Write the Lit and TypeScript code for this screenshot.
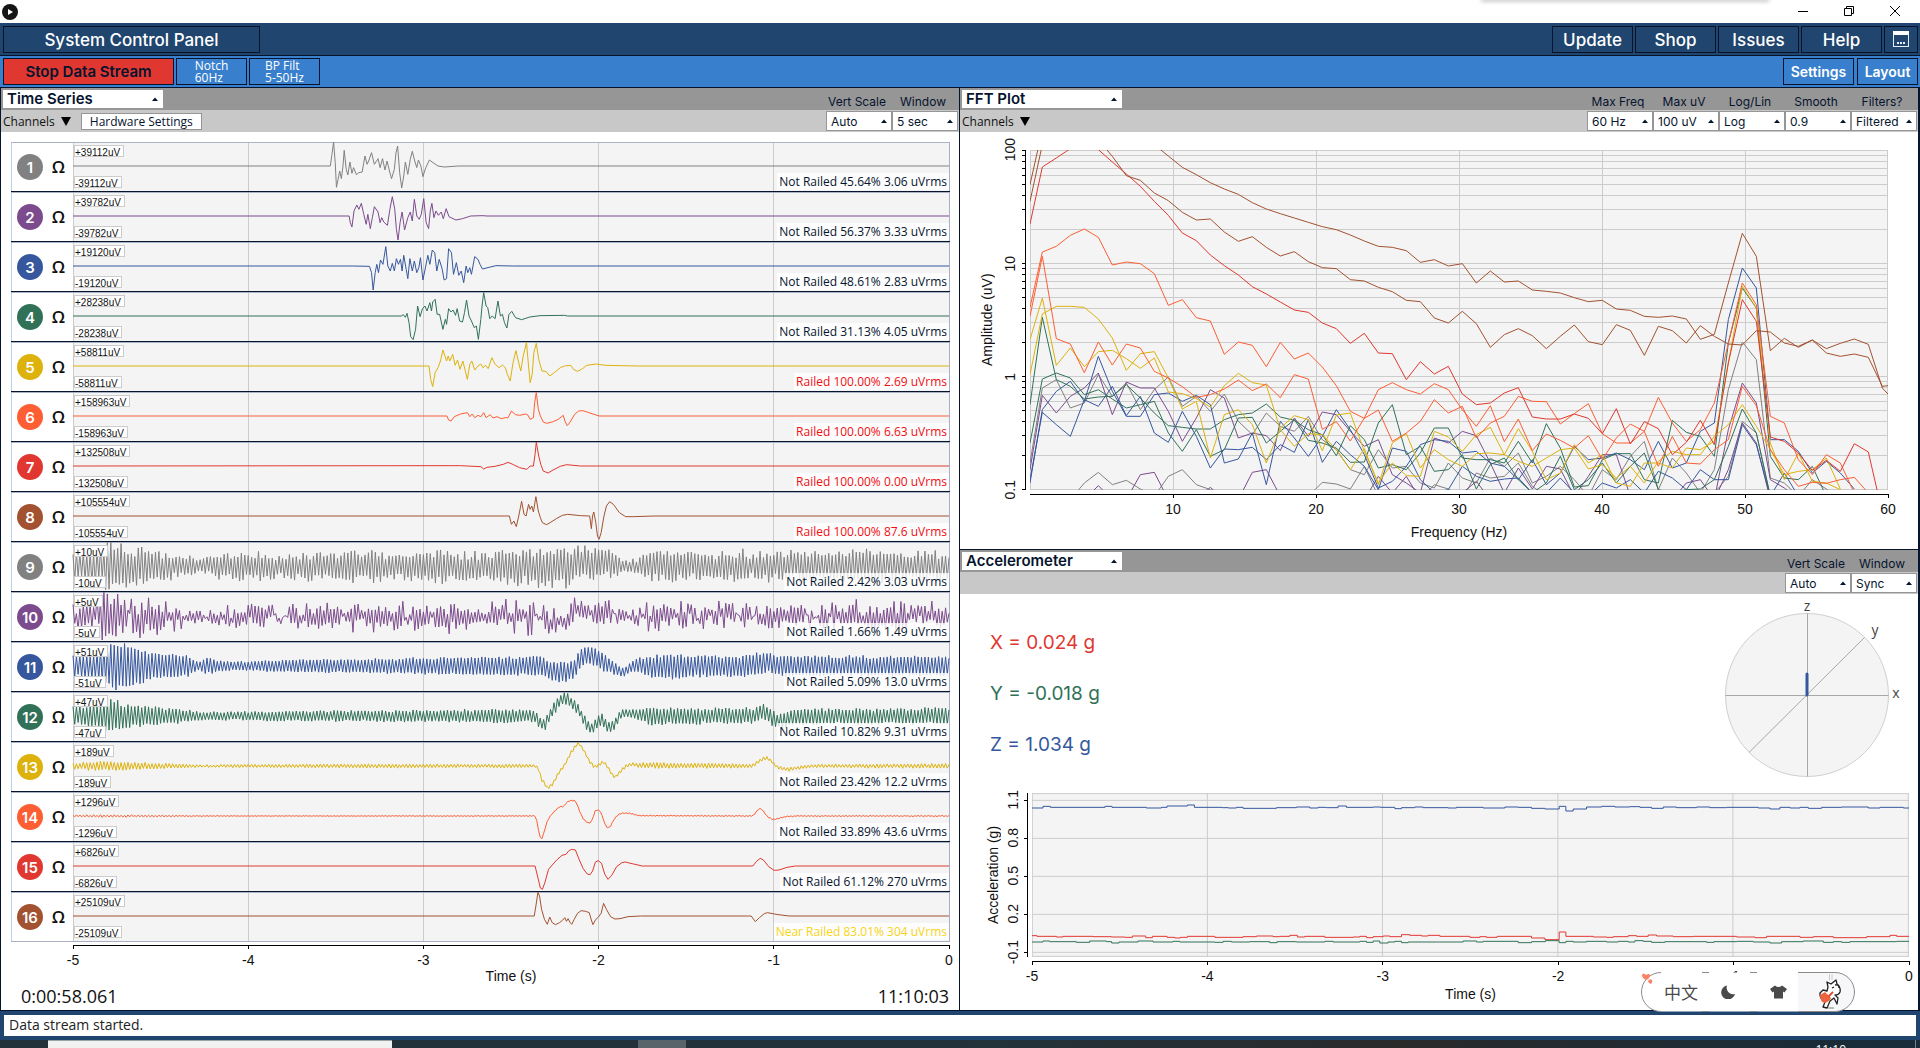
import { LitElement, html, svg, css } from "lit";
import { customElement, property } from "lit/decorators.js";

type Pt = [number, number];

const GRAY = "#818181", PURPLE = "#7c4b8d", BLUE = "#36579e", GREEN = "#317158";
const YELLOW = "#ddb20d", ORANGE = "#fd5e34", RED = "#e03830", BROWN = "#a25230";
const PALETTE = [GRAY, PURPLE, BLUE, GREEN, YELLOW, ORANGE, RED, BROWN];

/* Traces share a horizontal scale of 2148 units for the 5 s window and 150 units per row. */
const SPAN = 2148;
const ROW = 150;

const toPts = (s: string): Pt[] => s.trim().split(/\s+/).map((p) => p.split(",").map(Number) as Pt);
const path = (pts: Pt[]) => "M" + pts.map(([x, y]) => `${x.toFixed(1)} ${y.toFixed(1)}`).join("L");
const shift = (pts: Pt[], dx: number): Pt[] => pts.map(([x, y]) => [x + dx, y]);

function lerp(pts: Pt[], x: number): number {
  if (x <= pts[0][0]) return pts[0][1];
  for (let i = 1; i < pts.length; i++) {
    if (x <= pts[i][0]) {
      const [x0, y0] = pts[i - 1], [x1, y1] = pts[i];
      return y0 + ((y1 - y0) * (x - x0)) / (x1 - x0);
    }
  }
  return pts[pts.length - 1][1];
}

function rng(seed: number) {
  let s = seed;
  return () => ((s = (s * 1664525 + 1013904223) >>> 0) / 4294967296);
}

/* Events of the first eight channels: offsets from the row's centre line. */
const burst = (s: string) => path([[0, 0], ...shift(toPts(s), 605), [SPAN, 0]]);

/* Mains hum over a slow base curve: 255 cycles in the window, one low and one high turn per cycle. */
function hum(seed: number, env: string, base: string, noise: number) {
  const e = toPts(env), b = toPts(base), r = rng(seed), out: Pt[] = [];
  const turns = 510;
  for (let i = 0; i <= turns; i++) {
    const x = 179 + (i * SPAN) / turns;
    const a = lerp(e, x) * (1 - noise * r()) * (i % 2 ? 1 : -1);
    const y = lerp(b, x) + a + lerp(e, x) * noise * (r() - 0.5);
    out.push([x - 179, Math.max(-71, Math.min(72, y))]);
  }
  return path(out);
}
const smooth = (s: string) => path([[0, 0], ...shift(toPts(s), -179), [SPAN, 0]]);

interface Channel { n: number; uv: number; text: string; state: string; d: string }
const CHANNELS: Channel[] = [
  { uv: 39112, text: "Not Railed 45.64% 3.06 uVrms", state: "", d: burst("26,0 30,-35 34,-72 38,-10 41,64 45,40 49,15 53,38 57,0 60,-47 65,10 69,27 74,-12 79,22 83,5 90,26 96,20 104,18 108,-10 111,-30 116,-5 120,-15 127,-40 134,-5 143,-22 148,5 154,-22 160,12 165,-15 171,15 176,38 183,10 187,-40 191,-60 196,20 201,66 206,30 210,-12 216,25 222,-20 227,-44 233,-15 238,5 242,-18 248,0 253,32 260,5 269,-18 278,-10 290,0 305,3 340,0") },
  { uv: 39782, text: "Not Railed 56.37% 3.33 uVrms", state: "", d: burst("72,0 75,20 79,33 84,-15 91,-33 96,-20 102,-38 108,-5 114,25 118,-5 124,38 129,5 134,-28 143,-12 148,20 152,5 157,18 166,28 172,-20 178,-58 184,-20 188,40 192,72 197,20 202,-12 208,42 216,5 222,-12 227,15 232,-50 238,0 244,10 249,-5 255,-52 261,20 267,38 271,-15 275,-38 280,5 285,-15 291,-2 298,-12 303,8 310,-22 317,2 334,12 350,8 370,0 400,-1 410,0") },
  { uv: 19120, text: "Not Railed 48.61% 2.83 uVrms", state: "", d: burst("80,0 122,1 127,20 131,72 136,20 140,-5 144,20 149,-18 155,-5 162,-58 167,0 173,15 178,-8 183,15 188,-22 193,-5 198,-20 202,15 206,-32 212,10 216,38 221,-22 227,15 232,-15 238,20 243,5 247,-25 253,42 260,0 265,-32 270,-5 276,-48 282,-40 287,15 293,-20 300,8 305,42 311,38 316,-52 323,-40 328,25 335,-10 341,28 347,15 353,50 359,0 363,20 368,5 372,25 380,-28 388,-20 393,-5 399,9 415,4 432,-1 475,0") },
  { uv: 28238, text: "Not Railed 31.13% 4.05 uVrms", state: "", d: burst("200,0 205,-4 210,4 214,-8 219,20 223,62 229,71 235,40 240,-30 246,2 252,-22 258,-30 263,-15 270,-40 274,-15 277,-42 283,-50 288,-5 294,-5 302,40 308,10 311,25 316,-22 322,-12 327,-18 333,-2 337,-22 343,15 350,18 355,-10 360,-48 366,0 372,15 379,35 384,30 389,70 395,10 398,-30 402,-70 408,-30 412,-25 417,8 423,0 430,8 437,-45 443,0 448,-5 453,20 459,36 464,-5 471,-14 480,5 495,11 515,3 540,-1 600,-2 608,0") },
  { uv: 58811, text: "Railed 100.00% 2.69 uVrms", state: "railed", d: burst("225,0 268,0 272,40 277,62 283,20 290,5 296,-15 302,-48 307,-30 311,-15 315,-30 319,-15 326,-35 332,-2 338,-18 344,10 351,-15 357,15 362,40 368,-5 373,-15 380,12 388,0 395,-6 400,5 407,-2 413,8 422,-25 430,-5 440,5 448,-3 455,5 460,25 467,45 474,-10 481,-46 487,-15 493,15 499,-30 507,-71 512,0 516,50 521,25 525,-40 531,-68 537,-20 545,15 555,16 564,30 575,20 590,5 600,0 616,-2 622,10 632,16 642,10 655,-2 678,-6 700,-2 780,0") },
  { uv: 158963, text: "Railed 100.00% 6.63 uVrms", state: "railed", d: burst("312,0 316,12 322,15 330,2 345,-6 362,-10 368,2 374,-6 380,5 388,-2 395,2 402,-10 408,5 418,-4 425,6 435,2 445,8 455,5 462,5 470,-15 480,-4 490,-2 505,-6 511,-2 516,10 524,5 527,-40 531,-71 536,-20 541,0 548,18 556,22 570,18 585,10 597,-2 602,18 607,29 614,18 625,-5 635,-15 645,-16 660,-10 685,0") },
  { uv: 132508, text: "Railed 100.00% 0.00 uVrms", state: "railed", d: burst("320,-1 345,-1 395,2 402,9 410,4 430,1 450,-5 462,-11 475,-4 490,5 508,10 516,0 524,0 528,-35 531,-72 537,-30 542,-5 548,15 560,21 572,12 590,1 605,-4 640,0") },
  { uv: 105554, text: "Railed 100.00% 87.6 uVrms", state: "railed", d: burst("465,0 470,25 476,15 482,32 488,0 495,-44 501,-5 506,0 512,-35 516,-20 520,-30 524,-12 530,-58 536,-15 541,5 546,20 556,26 565,20 580,8 595,-2 608,-5 640,-1 662,0 666,38 669,0 672,-12 677,20 681,60 685,70 690,50 697,0 703,-30 711,-43 720,-35 735,-10 750,2 770,2 820,0") },
  { uv: 10, text: "Not Railed 2.42% 3.03 uVrms", state: "", d: hum(7, "179,46 240,50 262,80 300,70 340,54 400,42 450,34 485,18 520,34 600,40 700,38 800,42 900,46 1000,42 1200,50 1330,56 1400,56 1450,48 1490,52 1530,18 1560,20 1592,44 1625,52 1700,40 1900,46 2326,42", "179,0 1390,4 1420,-12 1500,-5 1530,0 2326,0", 0.4) },
  { uv: 5, text: "Not Railed 1.66% 1.49 uVrms", state: "", d: hum(23, "179,38 240,56 262,74 300,62 340,50 400,42 490,20 560,28 700,32 850,34 950,38 1100,38 1300,44 1400,40 1490,36 1540,18 1600,42 1750,38 1850,32 2000,38 2326,36", "179,0 1330,5 1380,25 1410,-20 1500,-8 1530,0 2326,0", 0.8) },
  { uv: 51, text: "Not Railed 5.09% 13.0 uVrms", state: "", d: hum(31, "179,30 240,42 265,72 320,64 370,42 460,30 486,12 505,24 560,14 620,15 750,20 950,22 1150,27 1300,29 1400,29 1480,26 1530,12 1560,20 1600,34 1650,38 1700,32 2326,29", "179,0 1330,0 1345,15 1390,20 1405,10 1420,-15 1435,-35 1450,-30 1480,-12 1510,10 1530,20 1545,5 1560,-2 1600,2 1830,0 1870,-10 1890,-8 1910,0 2326,0", 0.2) },
  { uv: 47, text: "Not Railed 10.82% 9.31 uVrms", state: "", d: hum(43, "179,28 240,34 262,48 320,38 400,25 480,16 500,12 600,14 900,17 1200,20 1480,17 1545,12 1600,26 1700,24 2326,24", "179,0 1312,0 1322,20 1335,28 1345,5 1360,-25 1372,-45 1385,-58 1400,-40 1420,-15 1435,20 1450,40 1462,25 1475,8 1490,35 1505,28 1520,0 1530,-10 1545,-6 1600,0 1846,0 1870,-12 1903,12 1915,18 1944,3 2326,0", 0.25) },
  { uv: 189, text: "Not Railed 23.42% 12.2 uVrms", state: "", d: hum(59, "179,9 220,12 260,15 350,10 450,6 490,4 600,5 900,6 1540,5 1600,9 1700,8 1900,5 2326,7", "179,0 1312,0 1320,8 1328,40 1342,66 1355,55 1368,25 1385,-5 1400,-40 1418,-72 1430,-50 1445,-15 1458,3 1470,-5 1480,-12 1490,2 1500,25 1508,34 1520,18 1535,0 1550,-5 1568,-2 1846,0 1858,-12 1878,-25 1891,-15 1907,5 1935,10 1960,5 1993,0 2326,0", 0.3) },
  { uv: 1296, text: "Not Railed 33.89% 43.6 uVrms", state: "", d: hum(61, "179,3 260,4 450,2 600,1 2326,2", "179,0 1312,0 1318,20 1322,55 1327,72 1331,62 1336,40 1343,12 1350,-1 1360,-14 1372,-28 1382,-28 1390,-42 1398,-46 1408,-47 1414,-38 1422,-12 1430,8 1440,20 1449,20 1454,4 1459,-14 1465,-19 1472,-14 1478,5 1484,26 1491,38 1497,30 1508,5 1520,-7 1530,-9 1545,-8 1568,-1 1846,0 1854,-12 1862,-23 1870,-18 1882,2 1895,11 1907,8 1927,2 1952,0 2326,0", 0.5) },
  { uv: 6826, text: "Not Railed 61.12% 270 uVrms", state: "", d: smooth("1312,0 1318,30 1325,66 1330,70 1336,50 1345,10 1352,0 1365,-18 1378,-32 1388,-35 1395,-46 1402,-50 1411,-48 1420,-20 1430,8 1440,24 1447,26 1453,15 1460,-12 1467,-16 1475,-8 1483,25 1491,40 1500,28 1512,2 1525,-10 1533,-12 1550,-7 1575,0 1846,0 1855,-14 1864,-23 1872,-18 1885,2 1898,13 1910,12 1930,4 1950,0") },
  { uv: 25109, text: "Near Railed 83.01% 304 uVrms", state: "near", d: smooth("1310,0 1314,-30 1319,-71 1323,-60 1328,-20 1335,10 1342,25 1348,3 1354,20 1362,26 1372,20 1380,12 1385,5 1389,16 1393,8 1398,20 1402,25 1408,10 1416,-8 1425,-16 1436,-14 1445,-10 1450,12 1454,26 1460,12 1468,2 1474,-8 1480,-38 1487,-20 1497,2 1508,9 1520,8 1540,2 1570,0 1842,0 1852,17 1862,5 1874,-7 1882,-10 1903,-5 1935,0") },
].map((c, i) => ({ ...c, n: i + 1 }));

/* Spectra: the first value is at 0 Hz, the others one bin (42 units) apart. Vertical axis: 339 units per decade. */
const bins = (s: string) =>
  path(s.trim().split(/\s+/).map((v, i) => [i === 0 ? 0 : 37 + 42 * (i - 1), Number(v) - 61] as Pt));
const SPECTRA: [string, string][] = [
  [GRAY, bins("1110 1110 1110 1110 1060 1028 1065 1052 1078 1100 1040 1020 1065 1080 1100 1110 1110 1110 1110 1110 1100 1058 1063 1078 1010 1100 1110 1110 1110 1065 1078 1110 1030 1045 1040 1000 1070 1100 1100 1110 1110 1110 1110 1110 1110 1110 1110 1110 1110 1090 1040 875 910 1100 1110 1110 1110")],
  [GRAY, bins("1000 775 750 835 820 735 800 760 840 780 742 830 800 845 793 875 915 850 890 905 860 930 960 1020 1035 960 1015 1010 1060 1075 1000 1045 1060 985 1010 970 1060 1040 1010 1050 1100 1020 1050 980 935 1080 985 1030 1090 1020 780 637 690 1045 1060 1100 1050 1078 1110")],
  [PURPLE, bins("1110 1110 1110 1110 1110 1068 1110 1110 1035 1028 1110 1110 1110 1073 1110 1110 1028 1020 1100 1110 1110 1110 1110 1110 1110 1040 1090 1040 1110 1110 1110 1090 1055 1110 1110 1110 1110 1110 1110 1110 1110 1110 1110 1110 1110 1110 1110 1110 1110 1110 1020 880 940 1110")],
  [PURPLE, bins("1020 797 850 800 775 730 855 757 775 775 845 935 865 780 805 925 910 918 963 865 920 847 855 905 950 930 1035 1060 1090 925 940 905 918 1000 1090 1015 1078 1010 1018 1100 1040 975 975 1100 1110 1110 1110 1060 1050 1110 900 760 820 1050 1075 1110")],
  [BLUE, bins("1060 840 785 755 815 680 785 860 860 795 790 815 797 825 1000 988 910 1065 875 925 980 920 840 900 975 1075 1055 1010 945 930 935 970 965 1000 1010 1050 990 1065 1030 950 990 985 970 990 1020 935 1015 1000 905 880 570 415 475 930 930 965 1030 995 1030 1078")],
  [BLUE, bins("1050 848 885 920 810 830 770 858 800 910 938 845 920 1015 958 960 953 990 945 968 870 998 935 975 1010 1080 955 965 1050 1090 1080 1010 1040 1055 1048 1045 1090 1090 1045 1090 1100 1060 1075 1050 1090 1025 1045 1080 1020 1050 1050 885 945 1100 1030 1100")],
  [GREEN, bins("825 563 750 770 808 802 800 765 805 850 888 893 898 898 870 855 850 823 862 872 900 915 978 888 930 1015 1005 1020 970 895 895 985 990 990 1000 935 1000 882 955 1072 1068 990 972 972 1050 1060 872 908 920 980 640 475 535 980 1045 1050 1010 1100")],
  [GREEN, bins("940 748 730 745 795 780 808 835 825 815 910 965 900 980 960 865 863 940 905 870 932 940 955 998 997 880 825 975 950 1025 1020 975 1078 1005 985 1050 1090 1060 980 1080 1050 1000 1060 1010 970 1080 1090 1080 1078 1050 950 838 910 1100")],
  [YELLOW, bins("735 553 530 530 533 568 625 722 672 666 745 838 815 985 855 840 885 1000 895 858 870 963 856 850 965 1060 1000 1038 1040 905 922 965 915 893 975 897 965 1050 1030 945 1000 975 1060 1070 1000 1000 1015 955 960 935 700 470 535 940 1050 970 1055 1060 1080")],
  [YELLOW, bins("630 505 707 655 711 666 662 687 716 685 787 792 807 832 768 731 759 766 900 950 912 915 960 1020 957 1065 940 912 1015 960 990 1010 972 970 975 995 1010 985 960 955 1018 1005 1045 1010 1060 995 965 975 975 920 885 825 890 960 1035 1025 1020 985 1078")],
  [ORANGE, bins("533 367 350 317 298 323 406 397 402 432 527 510 564 574 674 637 647 711 638 688 670 712 768 845 866 841 935 910 875 810 850 830 925 880 860 800 815 816 883 852 822 912 940 940 905 803 880 935 900 820 640 460 525 860 880 990 1035 975 1000 1090")],
  [ORANGE, bins("560 380 627 643 729 637 706 643 655 725 745 771 803 795 778 751 783 763 804 735 748 899 876 934 865 780 759 780 793 762 780 840 890 828 936 868 963 913 932 955 918 990 925 883 905 1010 920 1000 1003 960 930 770 828 960 1020 1070 1058 1061 1050 1043 1090")],
  [RED, bins("283 112 85 57 30 60 97 133 170 215 257 310 333 376 408 436 471 493 517 541 548 580 597 641 611 670 672 750 696 733 710 793 825 820 790 774 862 868 868 853 866 912 837 943 876 897 975 938 872 945 700 510 575 922 935 970 1022 992 1025 942 967 1150")],
  [BROWN, bins("215 45 -50 -60 -60 30 80 138 152 190 213 248 271 268 307 335 321 353 379 366 396 414 417 450 454 473 486 512 516 565 580 545 582 653 615 597 618 657 620 586 636 645 585 602 677 590 603 640 588 620 643 646 603 607 640 650 631 657 641 628 644 775 820")],
  [BROWN, bins("165 0 -60 -60 -60 -60 -60 -30 10 45 79 113 135 159 178 194 219 238 252 265 278 291 300 316 334 350 353 363 398 390 409 402 460 424 457 454 481 485 490 504 516 512 538 542 560 563 559 568 629 614 460 311 380 663 626 653 631 670 680 673 683 770 765")],
];

/* Accelerometer readings hold their value until the next sample. */
const steps = (s: string) => {
  const p = toPts(s);
  let d = `M0 ${p[0][1] - 760}`;
  for (const [x, y] of p.slice(1)) d += `H${x - 217}V${y - 760}`;
  return d + "H2630";
};
const ACCEL: [string, string][] = [
  [BLUE, steps("217,805 250,800 272,803 436,800 457,803 560,805 605,803 622,799 683,796 704,803 787,804 806,805 830,803 850,806 950,804 1010,802 1050,805 1075,803 1100,804 1135,799 1160,803 1240,802 1262,803 1305,807 1325,804 1365,802 1390,804 1465,805 1490,803 1570,805 1635,802 1675,803 1715,806 1755,808 1798,800 1818,814 1840,808 1880,802 1925,800 1965,802 2010,801 2040,803 2075,806 2110,802 2150,804 2210,802 2250,804 2300,803 2395,805 2430,808 2460,803 2490,805 2520,803 2545,806 2585,803 2645,802 2725,805 2760,803 2830,805")],
  [RED, steps("217,1188 232,1190 290,1192 310,1190 400,1191 455,1192 495,1193 518,1189 558,1194 578,1190 622,1193 645,1195 662,1193 683,1190 765,1193 850,1191 890,1189 940,1191 960,1190 990,1187 1013,1192 1035,1190 1095,1193 1180,1192 1200,1190 1220,1194 1240,1191 1270,1189 1290,1191 1325,1185 1350,1187 1385,1189 1405,1187 1440,1190 1530,1193 1560,1191 1580,1193 1612,1190 1715,1195 1755,1200 1798,1177 1818,1190 1900,1192 1940,1193 1960,1191 2005,1188 2030,1190 2065,1186 2090,1189 2140,1191 2200,1190 2330,1192 2385,1194 2420,1190 2520,1193 2560,1191 2620,1194 2720,1191 2790,1187 2810,1190")],
  [GREEN, steps("217,1207 250,1204 270,1206 350,1208 390,1204 440,1206 456,1210 478,1207 535,1204 580,1207 640,1205 660,1207 765,1208 790,1205 815,1207 870,1206 930,1209 952,1206 1010,1207 1095,1205 1120,1207 1200,1205 1220,1208 1240,1204 1260,1210 1285,1207 1305,1205 1325,1209 1345,1207 1440,1207 1510,1204 1550,1207 1570,1205 1675,1209 1715,1206 1757,1203 1798,1209 1818,1205 1840,1207 1880,1205 1940,1207 1975,1205 2005,1207 2025,1203 2050,1205 2075,1208 2115,1206 2240,1208 2262,1206 2330,1205 2380,1207 2430,1210 2465,1206 2530,1204 2590,1208 2620,1206 2645,1208 2670,1206 2810,1205")],
];

const arrow = html`<svg class="arrow" viewBox="0 0 8 6" aria-hidden="true"><path d="M1 5L4 1.4L7 5Z" /></svg>`;

const axisX = (n: number, from = 0) => html`<svg class="axis-x" viewBox="0 0 ${n * 10} 5" preserveAspectRatio="none" aria-hidden="true">
  <rect x="0" y="0" width=${n * 10} height="1" />
  ${Array.from({ length: n + 1 - from }, (_, i) => svg`<line x1=${(i + from) * 10} x2=${(i + from) * 10} y1="0" y2="4" vector-effect="non-scaling-stroke"/>`)}
</svg>`;
const ticksX = (labels: string[]) => html`<div class="ticks-x">${labels.map((l) => html`<span>${l}</span>`)}</div>`;

const shared = css`
  :host { display: flex; flex-direction: column; min-width: 0; min-height: 0; background: #fff; color: #06142e; font-family: "Open Sans", "Noto Sans", sans-serif; }
  * { box-sizing: border-box; }
  button, select { font: inherit; color: inherit; margin: 0; border-radius: 0; cursor: pointer; }
  .head, .nav { display: flex; height: 22px; flex: none; padding-right: 1px; }
  .head { background: #969696; align-items: flex-end; }
  .nav { background: #c8c8c8; align-items: center; }
  .spacer { flex: 1; }
  .pick { display: grid; }
  .pick > * { grid-area: 1 / 1; }
  .pick select { appearance: none; background: #fff; width: 100%; height: 100%; font-family: Inter, "Open Sans", sans-serif; outline: none; }
  .pick .arrow { width: 8px; height: 6px; justify-self: end; align-self: center; pointer-events: none; fill: #06142e; margin-right: 4px; }
  .pick.title { width: 160px; height: 18px; align-self: center; margin-left: 2px; }
  .pick.title select { border: 0; padding: 0 0 0 4px; font-size: 15px; line-height: 18px; font-weight: 600; }
  .pick.opt { width: 66px; height: 20px; }
  .pick.opt select { border: 1px solid #969696; padding: 0 0 0 4px; font-size: 12px; }
  .caption { width: 66px; text-align: center; font-family: Inter, "Open Sans", sans-serif; font-size: 12px; line-height: 16px; white-space: nowrap; padding-right: 4px; }
  .channels { border: 0; background: none; padding: 0 2px; font-size: 12px; color: #111; display: flex; align-items: center; gap: 6px; }
  .channels svg { width: 10px; height: 9px; }
  .axis-x { display: block; width: 100%; height: 5px; overflow: visible; shape-rendering: crispEdges; }
  .axis-x line, .axis-y line { stroke: #000; stroke-width: 1px; }
  .ticks-x { display: flex; justify-content: space-between; font-family: "Liberation Sans", Arial, sans-serif; font-size: 14px; line-height: 20px; color: #111; }
  .ticks-x span { width: 0; display: flex; justify-content: center; white-space: nowrap; }
  .axis-title { font-family: "Liberation Sans", Arial, sans-serif; font-size: 14px; line-height: 18px; text-align: center; color: #111; }
  .vertical { writing-mode: vertical-rl; transform: rotate(180deg); }
  .ticks-y { display: flex; flex-direction: column; justify-content: space-between; align-items: center; font-family: "Liberation Sans", Arial, sans-serif; font-size: 14px; line-height: 20px; color: #111; }
  .ticks-y span { height: 0; display: flex; align-items: center; justify-content: center; }
  .ticks-y b { font-weight: 400; }
  .axis-y { display: block; width: 100%; height: 100%; overflow: visible; shape-rendering: crispEdges; }
  .plot { display: block; width: 100%; height: 100%; min-height: 0; background: #f4f4f4; }
  .grid { stroke: #ccc; stroke-width: 1px; fill: none; shape-rendering: crispEdges; }
  .wave { fill: none; stroke-width: 1px; }
`;

interface Option { label: string; value: string }

class Panel extends LitElement {
  header(title: string, options: Option[], nav: unknown) {
    return html`
      <div class="head">
        <div class="pick title"><select aria-label="Widget"><option>${title}</option></select>${arrow}</div>
        <div class="spacer"></div>
        ${options.map((o, i) => html`<label class="caption" for="opt${i}">${o.label}</label>`)}
      </div>
      <div class="nav">
        ${nav}
        <div class="spacer"></div>
        ${options.map((o, i) => html`<div class="pick opt"><select id="opt${i}"><option>${o.value}</option></select>${arrow}</div>`)}
      </div>`;
  }
  channelsButton() {
    return html`<button class="channels" type="button">Channels
      <svg viewBox="0 0 10 9" aria-hidden="true"><path d="M0 0H10L5 9Z" /></svg></button>`;
  }
}

@customElement("channel-row")
class ChannelRow extends LitElement {
  @property({ attribute: false }) channel!: Channel;
  static styles = [css`
    :host { display: flex; flex: 1; min-height: 0; border-top: 1px solid #a9b5c4; border-bottom: 1px solid #06142e; }
    :host(:last-child) { border-bottom-color: #a9b0c2; }
    * { box-sizing: border-box; }
    .cell { width: 62px; flex: none; display: flex; align-items: center; gap: 8px; padding-left: 5px; border-left: 1px solid #c0d2e0; background: #fff; }
    .cell button { border: 0; padding: 0; color: #fff; cursor: pointer; display: flex; align-items: center; justify-content: center; font-family: Inter, sans-serif; }
    .badge { width: 26px; height: 26px; border-radius: 50%; font-size: 15px; font-weight: 600; }
    .cell .ohm { background: none; color: #111; font-family: "Open Sans", sans-serif; font-size: 17px; font-weight: 600; line-height: 20px; width: 15px; }
    .stack { flex: 1; min-width: 0; display: grid; grid-template: minmax(0, 1fr) / minmax(0, 1fr); background: #f4f4f4; border-right: 1px solid #a9b0c2; }
    .stack > * { grid-area: 1 / 1; }
    svg { width: 100%; height: 100%; display: block; overflow: visible; }
    .grid { stroke: #ccc; shape-rendering: crispEdges; }
    .wave { fill: none; stroke-width: 1px; }
    .uv { justify-self: start; margin: 2px 1px 3px; padding: 0 3px 0 0; border: 1px solid #ccc; background: #fff; color: #111; font: 10px/13px "Liberation Sans", Arial, sans-serif; height: 12px; white-space: nowrap; }
    .max { align-self: start; }
    .min { align-self: end; }
    .rms { justify-self: end; align-self: end; margin-bottom: 1px; padding: 0 2px; background: rgba(255, 255, 255, 0.8); font: 12px/17px "Open Sans", sans-serif; color: #06142e; white-space: nowrap; }
    .rms.railed { color: #f00d12; }
    .rms.near { color: #f7d417; }
  `];
  render() {
    const c = this.channel, color = PALETTE[(c.n - 1) % 8];
    return html`
      <div class="cell">
        <button class="badge" type="button" style="background:${color}">${c.n}</button>
        <button class="ohm" type="button">Ω</button>
      </div>
      <div class="stack">
        <svg viewBox="0 -69 ${SPAN} ${ROW - 6}" preserveAspectRatio="none" aria-hidden="true">
          ${[0, 1, 2, 3, 4].map((i) => svg`<line class="grid" x1=${(i * SPAN) / 5} x2=${(i * SPAN) / 5} y1="-69" y2="75" vector-effect="non-scaling-stroke"/>`)}
          <path class="wave" d=${c.d} stroke=${color} vector-effect="non-scaling-stroke" />
        </svg>
        <span class="uv max">+${c.uv}uV</span>
        <span class="uv min">-${c.uv}uV</span>
        <span class="rms ${c.state}">${c.text}</span>
      </div>`;
  }
}

@customElement("time-series")
class TimeSeries extends Panel {
  static styles = [shared, css`
    .hardware { margin-left: 8px; height: 17px; border: 1px solid #969696; background: #fff; padding: 0 8px; font-size: 12px; line-height: 15px; }
    .body { flex: 1; min-height: 0; display: flex; flex-direction: column; padding: 10px 9px 0 10px; }
    .rows { flex: 1; min-height: 0; display: flex; flex-direction: column; }
    .scale { margin-left: 62px; padding: 3px 1px 0 0; height: 42px; flex: none; }
    .axis-title { line-height: 12px; }
    .clock { display: flex; justify-content: space-between; height: 26px; flex: none; padding: 0 1px 0 10px; font-size: 18px; line-height: 25px; color: #111; }
  `];
  render() {
    return html`
      ${this.header("Time Series", [{ label: "Vert Scale", value: "Auto" }, { label: "Window", value: "5 sec" }],
        html`${this.channelsButton()}<button class="hardware" type="button">Hardware Settings</button>`)}
      <div class="body">
        <div class="rows">${CHANNELS.map((c) => html`<channel-row .channel=${c}></channel-row>`)}</div>
        <div class="scale">
          ${axisX(5)}
          ${ticksX(["-5", "-4", "-3", "-2", "-1", "0"])}
          <div class="axis-title">Time (s)</div>
        </div>
        <div class="clock"><span>0:00:58.061</span><span>11:10:03</span></div>
      </div>`;
  }
}

@customElement("fft-plot")
class FftPlot extends Panel {
  static styles = [shared, css`
    .body { flex: 1; min-height: 0; padding: 18px 30px 0 18px; display: grid; grid-template-columns: 20px 24px 8px minmax(0, 1fr); grid-template-rows: minmax(0, 1fr) 59px; }
    .under { grid-column: 4; padding-top: 4px; }
    .axis-title.below { margin-top: 4px; }
  `];
  render() {
    const minor: number[] = [];
    for (let dec = 0; dec < 3; dec++) for (let m = 1; m < 10; m++) minor.push(1017 - 339 * (dec + Math.log10(m)));
    minor.push(0);
    return html`
      ${this.header("FFT Plot", [
        { label: "Max Freq", value: "60 Hz" }, { label: "Max uV", value: "100 uV" }, { label: "Log/Lin", value: "Log" },
        { label: "Smooth", value: "0.9" }, { label: "Filters?", value: "Filtered" }], this.channelsButton())}
      <div class="body">
        <div class="axis-title vertical">Amplitude (uV)</div>
        <div class="ticks-y">${["100", "10", "1", "0.1"].map((t) => html`<span><b class="vertical">${t}</b></span>`)}</div>
        <svg class="axis-y" viewBox="0 0 8 1020" preserveAspectRatio="none" aria-hidden="true">
          <line x1="3" x2="3" y1="0" y2="1020" vector-effect="non-scaling-stroke" />
          ${minor.map((y) => svg`<line x1="0" x2="3" y1=${y + 2} y2=${y + 2} vector-effect="non-scaling-stroke"/>`)}
        </svg>
        <svg class="plot" viewBox="0 0 2574 1020" preserveAspectRatio="none" role="img" aria-label="FFT Plot">
          ${minor.map((y) => svg`<line class="grid" x1="0" x2="2574" y1=${y + 1.5} y2=${y + 1.5} vector-effect="non-scaling-stroke"/>`)}
          ${[1, 430, 859, 1288, 1717, 2146, 2572].map((x) => svg`<line class="grid" x1=${x} x2=${x} y1="0" y2="1020" vector-effect="non-scaling-stroke"/>`)}
          ${SPECTRA.map(([c, d]) => svg`<path class="wave" stroke=${c} d=${d} vector-effect="non-scaling-stroke"/>`)}
        </svg>
        <div class="under">
          ${axisX(6, 1)}
          ${ticksX(["", "10", "20", "30", "40", "50", "60"])}
          <div class="axis-title below">Frequency (Hz)</div>
        </div>
      </div>`;
  }
}

@customElement("accel-panel")
class AccelPanel extends Panel {
  static styles = [shared, css`
    .readout { height: 199px; flex: none; display: flex; justify-content: space-between; }
    .values { padding: 23px 0 0 30px; font-family: Inter, "Open Sans", sans-serif; font-size: 19px; line-height: 51px; }
    .values div { white-space: nowrap; }
    .x { color: #e03830; }
    .y { color: #317158; }
    .z { color: #36579e; }
    .dial { width: 220px; height: 199px; font: 15px "Open Sans", sans-serif; }
    .body { flex: 1; min-height: 0; padding: 0 9px 0 24px; display: grid; grid-template-columns: 18px 22px 8px minmax(0, 1fr); grid-template-rows: minmax(0, 1fr) 53px; }
    .ticks-y { padding: 7px 0 5px; }
    .under { grid-column: 4; padding-top: 4px; }
    .under .axis-title { line-height: 16px; }
  `];
  render() {
    const ys = [21, 135, 249, 363, 477];
    return html`
      ${this.header("Accelerometer", [{ label: "Vert Scale", value: "Auto" }, { label: "Window", value: "Sync" }], "")}
      <div class="readout">
        <div class="values">
          <div class="x">X = 0.024 g</div>
          <div class="y">Y = -0.018 g</div>
          <div class="z">Z = 1.034 g</div>
        </div>
        <svg class="dial" viewBox="0 0 220 199" role="img" aria-label="Orientation">
          <circle cx="109" cy="101" r="81.5" fill="#f4f4f4" stroke="#d0d0d0" />
          <path d="M27.5 101.5H190.5M109.5 19.5V182.5M51 158.5L166.5 43.5" stroke="#a8a8a8" fill="none" />
          <path d="M109 101V80" stroke="#36579e" stroke-width="3" stroke-linecap="round" />
          <g fill="#444" text-anchor="middle"><text x="109" y="17" font-size="14">z</text><text x="177" y="41" font-size="14">y</text><text x="198" y="104" font-size="14">x</text></g>
        </svg>
      </div>
      <div class="body">
        <div class="axis-title vertical">Acceleration (g)</div>
        <div class="ticks-y">${["1.1", "0.8", "0.5", "0.2", "-0.1"].map((t) => html`<span><b class="vertical">${t}</b></span>`)}</div>
        <svg class="axis-y" viewBox="0 0 8 492" preserveAspectRatio="none" aria-hidden="true">
          <line x1="3" x2="3" y1="0" y2="492" vector-effect="non-scaling-stroke" />
          ${ys.map((y) => svg`<line x1="0" x2="3" y1=${y + 1} y2=${y + 1} vector-effect="non-scaling-stroke"/>`)}
        </svg>
        <svg class="plot" viewBox="0 0 2630 492" preserveAspectRatio="none" role="img" aria-label="Acceleration">
          ${[1, ...ys, 489].map((y) => svg`<line class="grid" x1="0" x2="2630" y1=${y + 1} y2=${y + 1} vector-effect="non-scaling-stroke"/>`)}
          ${[1, 526, 1051, 1577, 2102, 2628].map((x) => svg`<line class="grid" x1=${x} x2=${x} y1="0" y2="492" vector-effect="non-scaling-stroke"/>`)}
          ${ACCEL.map(([c, d]) => svg`<path class="wave" stroke=${c} d=${d} vector-effect="non-scaling-stroke"/>`)}
        </svg>
        <div class="under">
          ${axisX(5)}
          ${ticksX(["-5", "-4", "-3", "-2", "-1", "0"])}
          <div class="axis-title">Time (s)</div>
        </div>
      </div>`;
  }
}

@customElement("ime-bar")
class ImeBar extends LitElement {
  static styles = css`
    :host { position: absolute; right: 65px; bottom: 36px; width: 214px; height: 40px; display: block; }
    .wrap { display: grid; height: 100%; }
    .wrap > * { grid-area: 1 / 1; }
    .frame { width: 214px; height: 40px; overflow: visible; }
    .items { display: flex; align-items: center; padding-left: 23px; }
    button { border: 0; background: none; padding: 0; color: #4a4a4a; font: 17px/20px "Noto Sans CJK SC", sans-serif; cursor: pointer; display: flex; }
    .lang { width: 57px; }
    .moon { width: 49px; }
    .shirt { width: 48px; }
  `;
  render() {
    return html`<div class="wrap">
      <svg class="frame" viewBox="0 0 214 40" aria-hidden="true">
        <rect x="0.5" y="0.5" width="213" height="39" rx="19.5" fill="#fff" />
        <path d="M157 0.5H194A19.5 19.5 0 0 1 194 39.5H157Z" fill="#f7f7f9" />
        <path d="M20 0.5A19.5 19.5 0 0 0 20 39.5M61 0.5H68M109 0.5H116M61 39.5H68M109 39.5H116M157 0.5H194A19.5 19.5 0 0 1 194 39.5H157" fill="none" stroke="#8a8a8a" />
        <path d="M1 3Q2 0 5 3Q8 1 9 3Q9 7 5 8Q1 6 1 3ZM7 9Q9 6 11 8Q12 10 10 12Q7 11 7 9Z" fill="#fb8265" />
      </svg>
      <div class="items">
        <button class="lang" type="button">中文</button>
        <button class="moon" type="button" aria-label="Night mode"><svg width="14" height="14" viewBox="0 0 14 14"><path d="M6 0.5A7 7 0 1 0 14 9A6.6 6.6 0 0 1 6 0.5Z" fill="#4a4a4a" /></svg></button>
        <button class="shirt" type="button" aria-label="Skin"><svg width="17" height="14" viewBox="0 0 17 14"><path d="M5 0.5Q8.5 3.5 12 0.5L17 4L14.5 7.5L13 6.5V13.5H4V6.5L2.5 7.5L0 4Z" fill="#4a4a4a" /></svg></button>
        <button type="button" aria-label="Mascot"><svg width="26" height="36" viewBox="0 0 26 36">
          <path d="M11.500 0V6M14 0V6" stroke="#ccc" />
          <path d="M10 13L9 8L13 10L18 6L19 10Q23 13 22 18Q21 21 17 21L20 24L19 30L16 24L12 27L9 34L5 33L7 28Q1 24 2 19L5 16L9 17Z" fill="#fff" stroke="#222" stroke-width="1.3" stroke-linejoin="round" />
          <path d="M2 21Q2 28 7 29Q12 27 13 24L7 18Z" fill="#f06340" />
          <path d="M10 23L15 18" stroke="#e2502c" stroke-width="2" />
          <path d="M17 11Q21 10 21 14M14 14L16 13" fill="none" stroke="#222" stroke-width="1.3" />
          <path d="M10 34H16" stroke="#bbb" stroke-width="2" />
        </svg></button>
      </div>
    </div>`;
  }
}

@customElement("app-root")
class AppRoot extends LitElement {
  static styles = css`
    :host { display: flex; flex-direction: column; position: relative; height: 100vh; min-height: 800px; overflow: hidden; background: #fff; font-family: "Open Sans", "Noto Sans", sans-serif; color: #06142e; }
    * { box-sizing: border-box; }
    button { margin: 0; border-radius: 0; cursor: pointer; font-family: Inter, "Open Sans", sans-serif; color: #fff; border: 1px solid #06142e; padding: 0; background: none; }
    .caption { height: 23px; flex: none; display: flex; align-items: center; justify-content: space-between; background: #fff; padding-left: 2px; }
    .notch { flex: 1; display: flex; justify-content: flex-end; align-self: flex-start; padding-right: 12px; }
    .notch i { width: 286px; height: 0; box-shadow: 0 0 4px 1px #999; }
    .win { display: flex; padding-right: 2px; }
    .win button { border: 0; width: 46px; height: 23px; }
    .win svg { display: block; margin: 0 auto 2px; }
    .bar { height: 33px; flex: none; display: flex; justify-content: space-between; align-items: flex-start; padding: 3px 2px 0 3px; background: #20456e; border-bottom: 1px solid #06142e; }
    .bar.sub { height: 32px; padding-top: 2px; background: #387fcd; }
    .set { display: flex; gap: 2px; }
    .set.wide { gap: 3px; }
    .bar button { height: 27px; font-size: 17px; line-height: 24px; font-weight: 500; }
    .bar .system { width: 257px; }
    .bar .top { width: 81px; }
    .bar .console { width: 34px; }
    .console svg { display: block; margin: auto; }
    .bar .stop { width: 171px; background: #e03830; color: #06142e; font-size: 15px; font-weight: 600; }
    .bar .filter { width: 71px; display: flex; flex-direction: column; align-items: center; justify-content: center; font-family: "Open Sans", sans-serif; font-size: 12px; font-weight: 400; line-height: 12px; }
    .filter span { text-align: left; width: max-content; }
    .bar .settings { width: 71px; font-size: 14px; font-weight: 600; }
    .bar .layout { width: 61px; font-size: 14px; font-weight: 600; }
    main { flex: 1; min-height: 0; display: grid; grid-template-columns: minmax(0, 1fr) minmax(0, 1fr); gap: 1px; background: #06142e; padding: 0 2px 1px 1px; }
    .right { display: grid; grid-template-rows: minmax(0, 461fr) minmax(0, 460fr); gap: 1px; min-height: 0; }
    footer { flex: none; height: 29px; background: #20456e; padding: 4px; }
    footer div { height: 21px; background: #fff; padding-left: 5px; font-size: 14px; line-height: 20px; color: #222; }
    .task { height: 8px; flex: none; display: flex; overflow: hidden; background: linear-gradient(90deg, #23323a, #23323a 50%, #2a2a2b 73%, #172c3a); padding-left: 48px; }
    .task .search { width: 344px; background: #f1f1f1; border-top: 1px solid #9aa2a5; }
    .task .active { width: 48px; margin-left: 246px; background: #59636a; }
    .task .time { margin-left: auto; margin-right: 69px; padding-top: 3px; color: #fff; font-size: 12px; line-height: 14px; }
    .task .peek { width: 5px; border-left: 1px solid #75818a; }
  `;
  render() {
    return html`
      <div class="caption">
        <svg width="16" height="16" viewBox="0 0 16 16" aria-hidden="true"><circle cx="8" cy="8" r="8" fill="#151515" /><path d="M6 5L11 8L6 11Z" fill="#fff" /></svg>
        <div class="notch"><i></i></div>
        <div class="win">
          <button type="button" aria-label="Minimize"><svg width="10" height="10" viewBox="0 0 10 10"><path d="M0 5.5H10" stroke="#000" /></svg></button>
          <button type="button" aria-label="Restore"><svg width="10" height="10" viewBox="0 0 10 10"><path d="M0.5 2.5H7.5V9.5H0.5ZM2.5 2.5V0.5H9.5V7.5H7.5" fill="none" stroke="#000" /></svg></button>
          <button type="button" aria-label="Close"><svg width="10" height="10" viewBox="0 0 10 10"><path d="M0 0L10 10M10 0L0 10" stroke="#000" /></svg></button>
        </div>
      </div>
      <div class="bar">
        <button class="system" type="button">System Control Panel</button>
        <div class="set">
          ${["Update", "Shop", "Issues", "Help"].map((t) => html`<button class="top" type="button">${t}</button>`)}
          <button class="console" type="button" aria-label="Console"><svg width="18" height="17" viewBox="0 0 18 17"><rect x="1.5" y="0.5" width="15" height="15" fill="none" stroke="#e8eef5" /><rect x="1" y="0" width="16" height="4" fill="#fff" /><path d="M5 12H7M8 12H10M11 12H13" stroke="#e8eef5" stroke-width="2" /></svg></button>
        </div>
      </div>
      <div class="bar sub">
        <div class="set">
          <button class="stop" type="button">Stop Data Stream</button>
          <button class="filter" type="button"><span>Notch<br />60Hz</span></button>
          <button class="filter" type="button"><span>BP Filt<br />5-50Hz</span></button>
        </div>
        <div class="set wide">
          <button class="settings" type="button">Settings</button>
          <button class="layout" type="button">Layout</button>
        </div>
      </div>
      <main>
        <time-series></time-series>
        <div class="right"><fft-plot></fft-plot><accel-panel></accel-panel></div>
      </main>
      <footer><div>Data stream started.</div></footer>
      <div class="task"><div class="search"></div><div class="active"></div><span class="time">11:10</span><div class="peek"></div></div>
      <ime-bar></ime-bar>`;
  }
}
